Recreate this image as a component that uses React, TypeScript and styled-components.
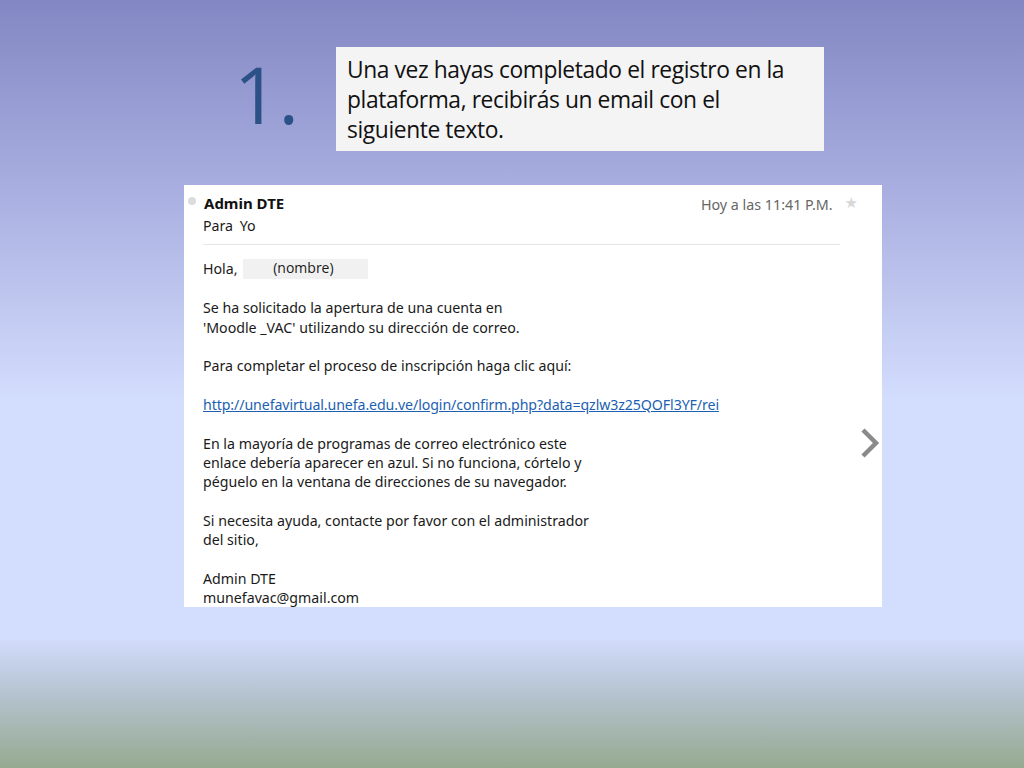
import React from "react";
import styled, { createGlobalStyle } from "styled-components";

const Global = createGlobalStyle`
  html, body { margin: 0; padding: 0; }
  body { width: 1024px; height: 768px; overflow: hidden; }
`;

const Slide = styled.div`
  width: 1024px;
  height: 768px;
  box-sizing: border-box;
  background: linear-gradient(
    to bottom,
    #8387c3 0%,
    #a9afe0 25%,
    #d3ddfd 52%,
    #d3ddfd 83%,
    #b6c4d2 90%,
    #95aa90 100%
  );
  padding-top: 47px;
  display: flex;
  flex-direction: column;
`;

const Heading = styled.div`
  display: flex;
  align-items: flex-start;
`;

const Number = styled.div`
  width: 102px;
  margin-left: 234px;
  margin-top: 2px;
  font-family: "Open Sans", "Liberation Sans", sans-serif;
  font-size: 78px;
  line-height: 90px;
  color: #2c5187;
`;

const Caption = styled.div`
  width: 488px;
  height: 104px;
  box-sizing: border-box;
  padding: 8px 6px 0 11px;
  background: #f4f4f4;
  font-family: "Open Sans", "Liberation Sans", sans-serif;
  font-size: 22.8px;
  line-height: 30px;
  color: #111;
  letter-spacing: -0.4px;
  white-space: nowrap;
`;

const Panel = styled.div`
  position: relative;
  margin: 34px 0 0 184px;
  width: 698px;
  height: 422px;
  box-sizing: border-box;
  background: #ffffff;
  padding: 8px 0 0 19px;
  font-family: "Noto Sans", "DejaVu Sans", sans-serif;
  font-size: 14.2px;
  color: #1a1a1a;
  overflow: hidden;
`;

const HeaderRow = styled.div`
  display: flex;
  align-items: center;
  width: 670px;
  margin-left: -15px;
  height: 20px;
`;

const Dot = styled.span`
  width: 8px;
  height: 8px;
  border-radius: 50%;
  background: #dcdcdc;
  margin-right: 8px;
  margin-top: -4px;
`;

const Sender = styled.span`
  font-weight: 700;
  font-size: 15px;
  color: #111;
  flex: 1;
`;

const Time = styled.span`
  color: #666;
  font-size: 14.3px;
  margin-top: 3px;
`;

const Star = styled.span`
  color: #d8d8d8;
  font-size: 15px;
  margin-left: 12px;
  margin-top: -3px;
`;

const ToLine = styled.div`
  margin-top: 3px;
  line-height: 20px;
  word-spacing: 3px;
`;

const Divider = styled.div`
  width: 637px;
  height: 1px;
  background: #e6e6e6;
  margin-top: 8px;
`;

const Body = styled.div`
  margin-top: 14px;
  line-height: 19.33px;
`;

const Para = styled.p`
  margin: 0 0 19.33px 0;
`;

const NameField = styled.span`
  display: inline-block;
  width: 125px;
  height: 20px;
  background: #f1f1f1;
  margin-left: 2px;
  box-sizing: border-box;
  padding-left: 30px;
  vertical-align: top;
  line-height: 18px;
  font-size: 14px;
  font-family: "Open Sans", "Liberation Sans", sans-serif;
`;

const Link = styled.a`
  color: #1d5fb2;
  text-decoration: underline;
  letter-spacing: -0.1px;
`;

const Chevron = styled.div`
  position: absolute;
  right: 0;
  top: 242px;
  width: 22px;
  height: 32px;
`;

export default function App() {
  return (
    <>
      <Global />
      <Slide>
        <Heading>
          <Number>1.</Number>
          <Caption>
            Una vez hayas completado el registro en la
            <br />
            plataforma, recibirás un email con el
            <br />
            siguiente texto.
          </Caption>
        </Heading>
        <Panel>
          <HeaderRow>
            <Dot />
            <Sender>Admin DTE</Sender>
            <Time>Hoy a las 11:41 P.M.</Time>
            <Star>★</Star>
          </HeaderRow>
          <ToLine>Para Yo</ToLine>
          <Divider />
          <Body>
            <Para>
              Hola, <NameField>(nombre)</NameField>
            </Para>
            <Para>
              Se ha solicitado la apertura de una cuenta en
              <br />
              'Moodle _VAC' utilizando su dirección de correo.
            </Para>
            <Para>Para completar el proceso de inscripción haga clic aquí:</Para>
            <Para>
              <Link href="#">http://unefavirtual.unefa.edu.ve/login/confirm.php?data=qzlw3z25QOFl3YF/rei</Link>
            </Para>
            <Para>
              En la mayoría de programas de correo electrónico este
              <br />
              enlace debería aparecer en azul. Si no funciona, córtelo y
              <br />
              péguelo en la ventana de direcciones de su navegador.
            </Para>
            <Para>
              Si necesita ayuda, contacte por favor con el administrador
              <br />
              del sitio,
            </Para>
            <Para>
              Admin DTE
              <br />
              munefavac@gmail.com
            </Para>
          </Body>
          <Chevron>
            <svg width="22" height="32" viewBox="0 0 22 32">
              <polyline
                points="3,3 16,16 3,29"
                fill="none"
                stroke="#8a8a8a"
                strokeWidth="4.5"
              />
            </svg>
          </Chevron>
        </Panel>
      </Slide>
    </>
  );
}
